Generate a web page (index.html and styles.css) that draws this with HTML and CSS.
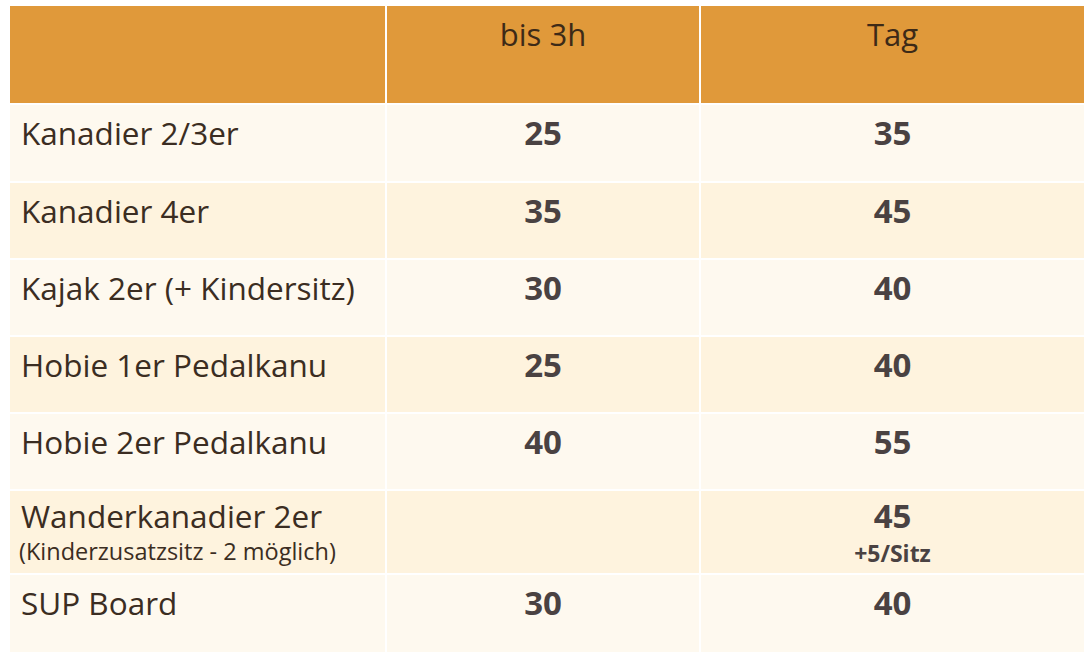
FILE: index.html
```html
<!DOCTYPE html>
<html lang="de">
<head>
<meta charset="utf-8">
<title>Preise</title>
<link rel="stylesheet" href="styles.css">
</head>
<body>
<div class="table">
  <div class="cell head"></div>
  <div class="cell head center">bis 3h</div>
  <div class="cell head center">Tag</div>

  <div class="cell light name">Kanadier 2/3er</div>
  <div class="cell light num">25</div>
  <div class="cell light num">35</div>

  <div class="cell dark name">Kanadier 4er</div>
  <div class="cell dark num">35</div>
  <div class="cell dark num">45</div>

  <div class="cell light name">Kajak 2er (+ Kindersitz)</div>
  <div class="cell light num">30</div>
  <div class="cell light num">40</div>

  <div class="cell dark name">Hobie 1er Pedalkanu</div>
  <div class="cell dark num">25</div>
  <div class="cell dark num">40</div>

  <div class="cell light name">Hobie 2er Pedalkanu</div>
  <div class="cell light num">40</div>
  <div class="cell light num">55</div>

  <div class="cell dark name tall">Wanderkanadier 2er<span class="sub">(Kinderzusatzsitz - 2 möglich)</span></div>
  <div class="cell dark num tall"></div>
  <div class="cell dark num tall">45<span class="subnum">+5/Sitz</span></div>

  <div class="cell light name">SUP Board</div>
  <div class="cell light num">30</div>
  <div class="cell light num">40</div>
</div>
</body>
</html>
```
FILE: styles.css
```css
html, body {
  margin: 0;
  background: #ffffff;
}
body {
  padding: 6px 7px 0 10px;
  font-family: "Open Sans", "Noto Sans", sans-serif;
  color: #3b2d22;
}
.table {
  display: grid;
  grid-template-columns: 375px 312px 383px;
  grid-template-rows: 97px 76px 75px 75px 75px 75px 82px 77px;
  gap: 2px;
  width: 1074px;
}
.cell {
  font-size: 31.5px;
  line-height: 40px;
  padding-top: 8px;
  box-sizing: border-box;
}
.head {
  background: #e0993a;
  padding-top: 8px;
  font-size: 31px;
  color: #3d2a17;
}
.center { text-align: center; }
.light { background: #fef9ef; }
.dark { background: #fef3de; }
.name {
  padding-left: 11px;
  color: #3b2d22;
}
.num {
  text-align: center;
  font-weight: 700;
  font-size: 33px;
  color: #4a4242;
}
.tall { padding-top: 5px; }
.sub {
  display: block;
  font-size: 23.5px;
  line-height: 30px;
  margin-left: -2px;
}
.subnum {
  display: block;
  font-size: 23px;
  line-height: 34px;
}
```
